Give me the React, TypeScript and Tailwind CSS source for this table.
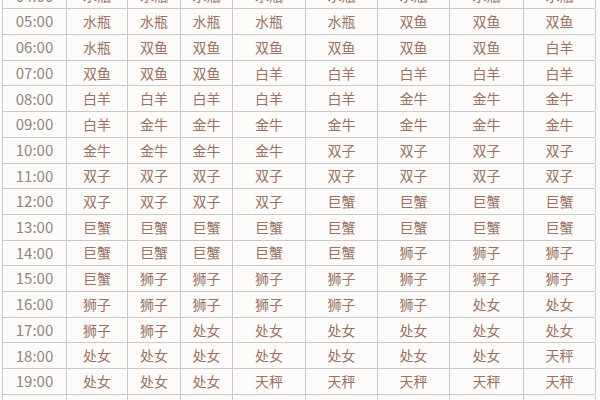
const rows: [string, string[]][] = [
  ["04:00", ["水瓶", "水瓶", "水瓶", "水瓶", "水瓶", "水瓶", "水瓶", "水瓶"]],
  ["05:00", ["水瓶", "水瓶", "水瓶", "水瓶", "水瓶", "双鱼", "双鱼", "双鱼"]],
  ["06:00", ["水瓶", "双鱼", "双鱼", "双鱼", "双鱼", "双鱼", "双鱼", "白羊"]],
  ["07:00", ["双鱼", "双鱼", "双鱼", "白羊", "白羊", "白羊", "白羊", "白羊"]],
  ["08:00", ["白羊", "白羊", "白羊", "白羊", "白羊", "金牛", "金牛", "金牛"]],
  ["09:00", ["白羊", "金牛", "金牛", "金牛", "金牛", "金牛", "金牛", "金牛"]],
  ["10:00", ["金牛", "金牛", "金牛", "金牛", "双子", "双子", "双子", "双子"]],
  ["11:00", ["双子", "双子", "双子", "双子", "双子", "双子", "双子", "双子"]],
  ["12:00", ["双子", "双子", "双子", "双子", "巨蟹", "巨蟹", "巨蟹", "巨蟹"]],
  ["13:00", ["巨蟹", "巨蟹", "巨蟹", "巨蟹", "巨蟹", "巨蟹", "巨蟹", "巨蟹"]],
  ["14:00", ["巨蟹", "巨蟹", "巨蟹", "巨蟹", "巨蟹", "狮子", "狮子", "狮子"]],
  ["15:00", ["巨蟹", "狮子", "狮子", "狮子", "狮子", "狮子", "狮子", "狮子"]],
  ["16:00", ["狮子", "狮子", "狮子", "狮子", "狮子", "狮子", "处女", "处女"]],
  ["17:00", ["狮子", "狮子", "处女", "处女", "处女", "处女", "处女", "处女"]],
  ["18:00", ["处女", "处女", "处女", "处女", "处女", "处女", "处女", "天秤"]],
  ["19:00", ["处女", "处女", "处女", "天秤", "天秤", "天秤", "天秤", "天秤"]],
  ["20:00", ["天秤", "天秤", "天秤", "天秤", "天秤", "天秤", "天秤", "天秤"]],
];

export default function App() {
  return (
    <div className="w-[600px] h-[400px] overflow-hidden bg-[#fdfcfa] font-['Noto_Sans_CJK_SC',sans-serif]">
      {/* table scrolled so the 04:00 row is cut at the top */}
      <div className="mt-[-16.4px] ml-[2px] w-[593px] border-l border-[#cdc8c4]">
        {rows.map(([time, signs]) => (
          <div
            key={time}
            className="grid grid-cols-[64px_61px_53px_52px_73px_72px_72px_74px_72px] h-[25.71px] border-b border-[#cdc8c4]"
          >
            <div className="flex items-center justify-center border-r border-[#cdc8c4] text-[15px] text-[#908680]">
              {time}
            </div>
            {signs.map((s, i) => (
              <div
                key={i}
                className="flex items-center justify-center border-r border-[#cdc8c4] text-[14px] text-[#9a7264]"
              >
                {s}
              </div>
            ))}
          </div>
        ))}
      </div>
    </div>
  );
}
